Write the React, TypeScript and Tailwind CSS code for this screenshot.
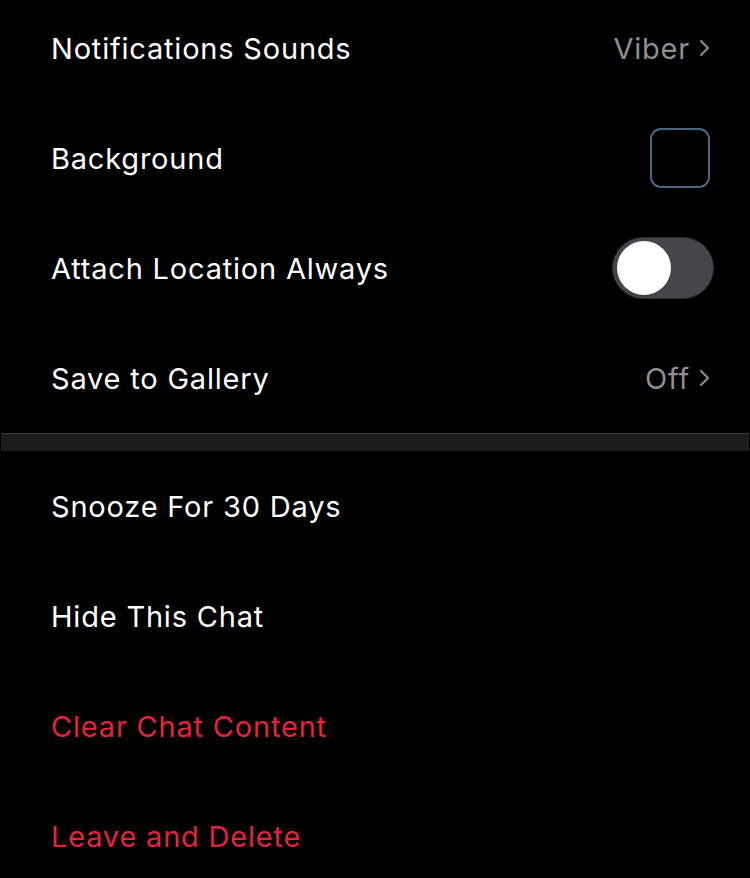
import React from 'react';

const font = { fontFamily: 'Inter, "Noto Sans", sans-serif' };

const Chevron = () => (
  <svg width="12" height="20" viewBox="0 0 12 20" fill="none" className="ml-[8px]">
    <path d="M3 3l7 7-7 7" stroke="#8e8e93" strokeWidth="2" strokeLinecap="round" strokeLinejoin="round" />
  </svg>
);

const Row = ({ label, danger, right, first }: { label: string; danger?: boolean; right?: React.ReactNode; first?: boolean }) => (
  <div className={`flex items-center justify-between pl-[51px] pr-[40px] ${first ? 'h-[103px] pb-[7px]' : 'h-[110px]'}`}>
    <span className={`text-[29px] leading-none tracking-[0.8px] ${danger ? 'text-[#e5243b]' : 'text-white'}`}>{label}</span>
    {right}
  </div>
);

const Value = ({ text }: { text: string }) => (
  <div className="flex items-center">
    <span className="text-[29px] leading-none tracking-[0.8px] text-[#8e8e93]">{text}</span>
    <Chevron />
  </div>
);

const Toggle = () => (
  <div className="w-[102px] h-[62px] rounded-full bg-[#46464a] border border-[#2c2c2e] flex items-center pl-[4px] -mr-[4px]">
    <div className="w-[54px] h-[54px] rounded-full bg-white shadow" />
  </div>
);

export default function App() {
  return (
    <div className="w-[750px] h-[878px] overflow-hidden bg-black" style={font}>
      <Row first label="Notifications Sounds" right={<Value text="Viber" />} />
      <Row label="Background" right={<div className="w-[60px] h-[60px] rounded-[11px] border-2 border-[#4b6784]" />} />
      <Row label="Attach Location Always" right={<Toggle />} />
      <Row label="Save to Gallery" right={<Value text="Off" />} />
      <div className="mx-[1px] h-[18px] bg-[#1c1c1c] border-t border-[#3c3c3c]" />
      <Row label="Snooze For 30 Days" />
      <Row label="Hide This Chat" />
      <Row label="Clear Chat Content" danger />
      <Row label="Leave and Delete" danger />
    </div>
  );
}
